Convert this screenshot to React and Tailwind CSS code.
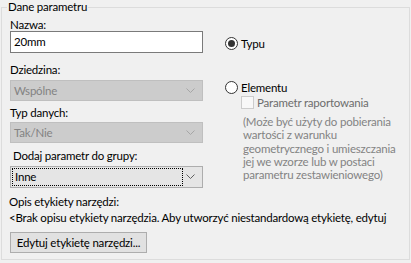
import React from "react";

const font = { fontFamily: 'Lato, "Noto Sans", "Liberation Sans", sans-serif' };

function Chevron({ color }) {
  return (
    <svg width="9" height="6" viewBox="0 0 9 6" className="shrink-0">
      <path d="M0.5 0.5 L4.5 4.5 L8.5 0.5" fill="none" stroke={color} strokeWidth="1" />
    </svg>
  );
}

function Combo({ text, disabled }) {
  if (disabled) {
    return (
      <div className="flex items-center h-[21px] w-[193px] bg-[#cccccc] border border-[#bfbfbf] pl-[3px] pr-[7px]">
        <span className="flex-1 text-[#838383] leading-[14px]">{text}</span>
        <Chevron color="#a6a6a6" />
      </div>
    );
  }
  return (
    <div className="flex items-center h-[22px] w-[193px] bg-[#e5e5e5] border border-[#adadad] pl-[1px] pr-[7px]">
      <div className="flex items-center h-[18px] w-[171px] border border-dotted border-black pl-[2px]">
        <span className="leading-[14px] text-black">{text}</span>
      </div>
      <div className="flex-1 flex justify-end">
        <Chevron color="#606060" />
      </div>
    </div>
  );
}

export default function App() {
  return (
    <div className="w-[411px] h-[263px] bg-[#f0f0f0] text-[11.5px] tracking-[-0.2px] text-black overflow-hidden" style={font}>
      <fieldset className="ml-[1px] w-[409px] h-[260px] border border-[#dcdcdc] px-0">
        <legend className="ml-[5px] px-[1px] leading-[14px] text-black">Dane parametru</legend>
        <div className="flex">
          <div className="flex flex-col pl-[8px] w-[222px]">
            <div className="mt-[5px] h-[12px] leading-[12px]">Nazwa:</div>
            <div className="h-[22px] w-[193px] bg-white border border-[#7a7a7a] flex items-center pl-[3px] leading-[14px]">20mm</div>
            <div className="mt-[11px] h-[12px] leading-[12px]">Dziedzina:</div>
            <div className="mt-[4px]"><Combo text="Wspólne" disabled /></div>
            <div className="mt-[6px] h-[12px] leading-[12px]">Typ danych:</div>
            <div className="mt-[3px]"><Combo text="Tak/Nie" disabled /></div>
            <div className="mt-[7px] h-[12px] leading-[12px] pl-[3px]">Dodaj parametr do grupy:</div>
            <div className="mt-[4px]"><Combo text="Inne" /></div>
          </div>
          <div className="flex flex-col pl-[1px]">
            <div className="mt-[23px] flex items-center h-[13px]">
              <div className="w-[13px] h-[13px] rounded-full border border-[#333333] bg-white flex items-center justify-center">
                <div className="w-[7px] h-[7px] rounded-full bg-[#333333]" />
              </div>
              <span className="ml-[3px] leading-[13px]">Typu</span>
            </div>
            <div className="mt-[31px] flex items-center h-[13px]">
              <div className="w-[13px] h-[13px] rounded-full border border-[#333333] bg-white" />
              <span className="ml-[3px] leading-[13px]">Elementu</span>
            </div>
            <div className="mt-[2px] ml-[16px] flex items-center h-[13px]">
              <div className="w-[13px] h-[13px] border border-[#cccccc] bg-[#f8f8f8]" />
              <span className="ml-[3px] leading-[13px] text-[#6d6d6d] whitespace-nowrap">Parametr raportowania</span>
            </div>
            <div className="mt-[6px] ml-[18px] leading-[13.3px] text-[#838383] whitespace-nowrap">
              (Może być użyty do pobierania<br />
              wartości z warunku<br />
              geometrycznego i umieszczania<br />
              jej we wzorze lub w postaci<br />
              parametru zestawieniowego)
            </div>
          </div>
        </div>
        <div className="flex flex-col pl-[7px]">
          <div className="mt-[8px] h-[12px] leading-[12px]">Opis etykiety narzędzi:</div>
          <div className="mt-[4px] h-[12px] leading-[12px] whitespace-nowrap">&lt;Brak opisu etykiety narzędzia. Aby utworzyć niestandardową etykietę, edytuj</div>
          <div className="mt-[8px] ml-[1px] h-[21px] w-[137px] bg-[#e1e1e1] border border-[#adadad] flex items-center justify-center leading-[14px] whitespace-nowrap">Edytuj etykietę narzędzi...</div>
        </div>
      </fieldset>
    </div>
  );
}
